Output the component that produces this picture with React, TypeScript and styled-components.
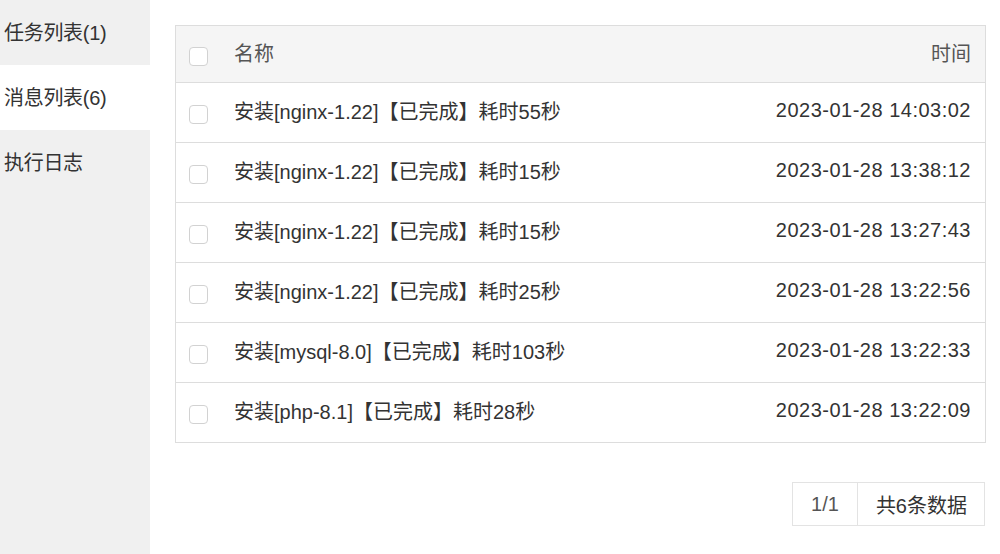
import React from "react"
import styled, { createGlobalStyle } from "styled-components"

const GlobalStyle = createGlobalStyle`
  html, body {
    margin: 0;
    padding: 0;
    background: #fff;
  }
  body {
    font-family: "Liberation Sans", "Noto Sans CJK SC", sans-serif;
    color: #333;
  }
`

const messages = [
  { name: "安装[nginx-1.22]【已完成】耗时55秒", time: "2023-01-28 14:03:02" },
  { name: "安装[nginx-1.22]【已完成】耗时15秒", time: "2023-01-28 13:38:12" },
  { name: "安装[nginx-1.22]【已完成】耗时15秒", time: "2023-01-28 13:27:43" },
  { name: "安装[nginx-1.22]【已完成】耗时25秒", time: "2023-01-28 13:22:56" },
  { name: "安装[mysql-8.0]【已完成】耗时103秒", time: "2023-01-28 13:22:33" },
  { name: "安装[php-8.1]【已完成】耗时28秒", time: "2023-01-28 13:22:09" },
]

const tabs = ["任务列表(1)", "消息列表(6)", "执行日志"]

const App = () => {
  return (
    <Page>
      <GlobalStyle />
      <Side>
        {tabs.map((t, i) => (
          <Tab key={t} active={i === 1}>
            {t}
          </Tab>
        ))}
      </Side>

      <Main>
        <Table>
          <HeadRow>
            <Check />
            <NameCell>名称</NameCell>
            <TimeCell>时间</TimeCell>
          </HeadRow>
          {messages.map((m, i) => (
            <Row key={i}>
              <Check />
              <NameCell>{m.name}</NameCell>
              <TimeCell spaced>{m.time}</TimeCell>
            </Row>
          ))}
        </Table>

        <Pager>
          <PageNum>1/1</PageNum>
          <PageTotal>共6条数据</PageTotal>
        </Pager>
      </Main>
    </Page>
  )
}
export default App

const Page = styled.div`
  display: flex;
  width: 1000px;
  height: 554px;
  overflow: hidden;
`
// left tabs
const Side = styled.div`
  width: 150px;
  flex-shrink: 0;
  background: #f0f0f0;
  display: flex;
  flex-direction: column;
`
const Tab = styled.div<{ active?: boolean }>`
  height: 65px;
  display: flex;
  align-items: center;
  padding: 0 0 2px 4px;
  box-sizing: border-box;
  font-size: 20px;
  letter-spacing: -0.3px;
  color: #333;
  background: ${(p) => (p.active ? "#fff" : "transparent")};
`

const Main = styled.div`
  flex: 1;
  padding: 25px 14px 0 25px;
  display: flex;
  flex-direction: column;
`
const Table = styled.div`
  border: 1px solid #ddd;
`
const Row = styled.div`
  display: flex;
  align-items: center;
  height: 59px;
  padding: 0 14px 0 13px;
  border-top: 1px solid #ddd;
  font-size: 20px;
  color: #333;
`
const HeadRow = styled(Row)`
  height: 56px;
  border-top: none;
  background: #f5f5f5;
  color: #555;
`
const Check = styled.span`
  width: 17px;
  height: 17px;
  border: 1px solid #d2d2d2;
  border-radius: 4px;
  background: #fff;
  flex-shrink: 0;
  margin: 4px 26px 0 0;
`
const NameCell = styled.div`
  flex: 1;
  white-space: nowrap;
  padding-bottom: 4px;
`
const TimeCell = styled.div<{ spaced?: boolean }>`
  text-align: right;
  white-space: nowrap;
  padding-bottom: 4px;
  letter-spacing: ${(p) => (p.spaced ? "0.5px" : "0")};
`

const Pager = styled.div`
  align-self: flex-end;
  display: flex;
  margin-top: 39px;
  margin-right: 1px;
  border: 1px solid #e3e3e3;
  height: 42px;
  font-size: 20px;
`
const PageNum = styled.div`
  display: flex;
  align-items: center;
  padding: 0 18px;
  color: #555;
  border-right: 1px solid #e3e3e3;
`
const PageTotal = styled.div`
  display: flex;
  align-items: center;
  padding: 0 17px 0 18px;
  color: #333;
`
